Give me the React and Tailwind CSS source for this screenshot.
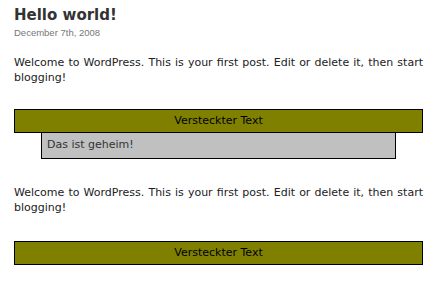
import React from 'react';

const font = { fontFamily: '"DejaVu Sans", "Liberation Sans", sans-serif' };

const intro =
  'Welcome to WordPress. This is your first post. Edit or delete it, then start blogging!';

const HiddenBar = () => (
  <div className="h-[24px] border border-black bg-[#808000] text-center text-[11px] leading-[22px] text-black">
    Versteckter Text
  </div>
);

const App = () => {
  return (
    <div className="min-h-screen bg-white pl-[14px] pr-[17px] pt-[5px] text-[#333]" style={font}>
      {/* Post header */}
      <h2 className="text-[15px] font-bold leading-[20px] text-[#333]">Hello world!</h2>
      <p
        className="mt-[2px] text-[9.5px] leading-[12px] text-[#777]"
        style={{ fontFamily: '"Liberation Sans", sans-serif' }}
      >
        December 7th, 2008
      </p>

      {/* First post body */}
      <p className="mt-[16px] text-justify text-[11px] leading-[15px] text-[#222]">{intro}</p>

      <div className="mt-[24px]">
        <HiddenBar />
        <div className="mx-[27px] h-[26px] border border-t-0 border-black bg-[#c0c0c0] pl-[5px] text-[11px] leading-[24px] text-[#333]">
          Das ist geheim!
        </div>
      </div>

      {/* Second post body */}
      <p className="mt-[26px] text-justify text-[11px] leading-[15px] text-[#222]">{intro}</p>

      <div className="mt-[26px]">
        <HiddenBar />
      </div>
    </div>
  );
};

export default App;
